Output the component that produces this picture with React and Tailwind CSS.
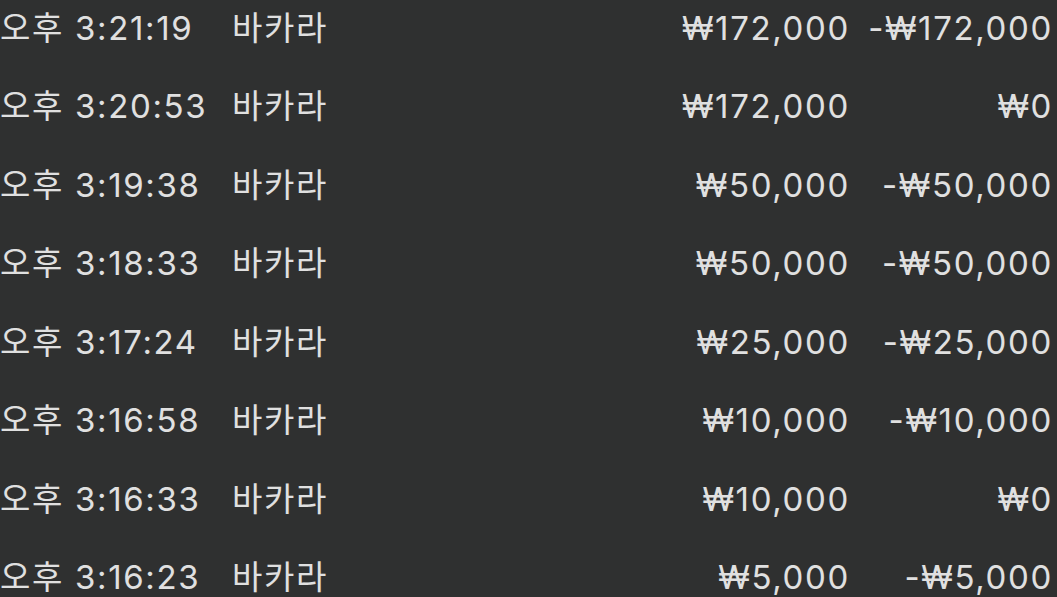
const rows = [
  ["오후 3:21:19", "₩172,000", "-₩172,000"],
  ["오후 3:20:53", "₩172,000", "₩0"],
  ["오후 3:19:38", "₩50,000", "-₩50,000"],
  ["오후 3:18:33", "₩50,000", "-₩50,000"],
  ["오후 3:17:24", "₩25,000", "-₩25,000"],
  ["오후 3:16:58", "₩10,000", "-₩10,000"],
  ["오후 3:16:33", "₩10,000", "₩0"],
  ["오후 3:16:23", "₩5,000", "-₩5,000"],
];

export default function App() {
  return (
    <div
      className="w-[1057px] h-[597px] overflow-hidden bg-[#2f3030] text-[#e0e0e0]"
      style={{ fontFamily: 'Inter, "Noto Sans CJK KR", sans-serif' }}
    >
      <div className="mt-[-11px] flex flex-col">
        {rows.map(([t, bet, res], i) => (
          <div key={i} className="flex h-[78.5px] items-center text-[33px] leading-none tracking-[0.05em] pr-[4px]">
            <span className="w-[232px] shrink-0 whitespace-nowrap">{t}</span>
            <span className="flex-1 whitespace-nowrap">바카라</span>
            <span className="whitespace-nowrap text-right">{bet}</span>
            <span className="w-[203px] shrink-0 whitespace-nowrap text-right">{res}</span>
          </div>
        ))}
      </div>
    </div>
  );
}
